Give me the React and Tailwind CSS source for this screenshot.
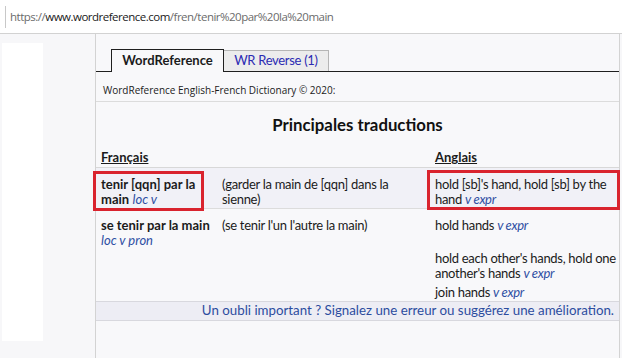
import React from 'react';

const font = { fontFamily: 'Lato, "Open Sans", sans-serif' };

const Pos = ({ children }) => <i className="text-[#2f4fa3]">{children}</i>;

const App = () => {
    return (
        <div className="w-[622px] h-[358px] overflow-hidden bg-[#f7f7f9] text-[#1b1b1b]" style={font}>
            {/* address bar */}
            <div className="h-[34px] bg-white border-b border-[#d2d2d2] flex items-center">
                <div className="ml-[5px] w-px h-[22px] bg-[#c8c8c8]"></div>
                <div className="ml-[4px] text-[11.5px] tracking-[-0.5px] text-[#6b6b6b]" style={{ fontFamily: '"Open Sans", sans-serif' }}>
                    https://<span className="text-[#1a1a1a]">www.wordreference.com</span>/fren/tenir%20par%20la%20main
                </div>
            </div>

            <div className="flex">
                <div className="w-[95px] shrink-0">
                    <div className="ml-[2px] mt-[9px] w-[41px] h-[298px] bg-white"></div>
                </div>

                <div className="w-[525px] h-[324px] border-l border-r border-[#d3d3d3] bg-[#f8f8fa]">
                    {/* tabs */}
                    <div className="pt-[15px] pl-[15px] flex items-end border-b border-[#1f1f1f]">
                        <div className="h-[23px] -mb-px w-[113px] border border-b-0 border-[#1f1f1f] bg-[#f8f8fa] flex items-center justify-center text-[13px] font-bold">
                            WordReference
                        </div>
                        <div className="h-[21px] w-[105px] border border-l-0 border-b-0 border-[#b5b5b5] bg-[#ececec] flex items-center justify-center text-[13px] tracking-[-0.3px] text-[#2b2bb3]">
                            WR Reverse (1)
                        </div>
                    </div>

                    <div className="h-[30px] pl-[7px] pt-[11px] border-b border-[#dcdcdc] text-[10px] leading-[14px]" style={{ fontFamily: '"Open Sans", sans-serif' }}>
                        WordReference English-French Dictionary © 2020:
                    </div>

                    <div className="h-[45px] flex items-center justify-center text-[16.8px] font-bold text-[#111]">
                        Principales traductions
                    </div>

                    {/* header */}
                    <div className="h-[21px] flex items-end pb-[2px] border-b border-[#d8d8d8] text-[13px] leading-[15px] font-bold">
                        <div className="w-[121px] pl-[5px] underline">Français</div>
                        <div className="w-[213px]"></div>
                        <div className="pl-[5px] underline">Anglais</div>
                    </div>

                    {/* row 1 */}
                    <div className="relative flex bg-[#f1f1f7] pt-[9px] pb-px border-b border-[#dcdcdc] text-[13px] leading-[15px]">
                        <div className="w-[121px] pl-[5px] pr-[3px]"><b>tenir [qqn] par la main</b> <Pos>loc v</Pos></div>
                        <div className="w-[213px] pl-[5px] pr-[8px] tracking-[-0.3px]">(garder la main de [qqn] dans la sienne)</div>
                        <div className="flex-1 pl-[5px] tracking-[-0.3px]">hold [sb]'s hand, hold [sb] by the hand <Pos>v expr</Pos></div>
                        <div className="absolute left-[-3px] top-[3px] w-[111px] h-[40px] border-[3px] border-[#d9232e]"></div>
                        <div className="absolute left-[331px] top-[2px] w-[193px] h-[40px] border-[3px] border-[#d9232e]"></div>
                    </div>

                    {/* row 2 */}
                    <div className="flex pt-[9px] pb-px text-[13px] leading-[15px]">
                        <div className="w-[121px] pl-[5px] pr-[3px]"><b>se tenir par la main</b> <Pos>loc v pron</Pos></div>
                        <div className="w-[213px] pl-[5px] pr-[8px] tracking-[-0.3px]">(se tenir l'un l'autre la main)</div>
                        <div className="flex-1 pl-[5px] tracking-[-0.3px]">hold hands <Pos>v expr</Pos></div>
                    </div>
                    <div className="flex pt-[2px] pb-[2px] text-[13px] leading-[15px]">
                        <div className="w-[334px]"></div>
                        <div className="flex-1 pl-[5px] tracking-[-0.3px]">hold each other's hands, hold one another's hands <Pos>v expr</Pos></div>
                    </div>
                    <div className="flex pt-[2px] pb-px text-[13px] leading-[15px]">
                        <div className="w-[334px]"></div>
                        <div className="flex-1 pl-[5px] tracking-[-0.3px]">join hands <Pos>v expr</Pos></div>
                    </div>

                    <div className="h-[20px] border-t border-b border-[#d8d8de] bg-[#ededf4] flex items-center justify-end pr-[5px] text-[13.3px] text-[#2c4c9f]">
                        Un oubli important ? Signalez une erreur ou suggérez une amélioration.
                    </div>
                </div>
            </div>
        </div>
    );
};

export default App;
